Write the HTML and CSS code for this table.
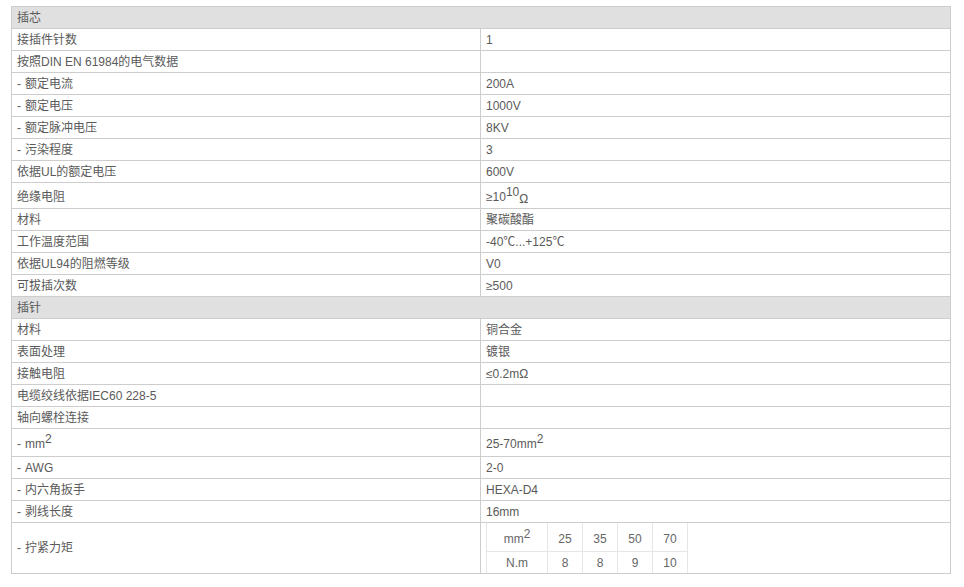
FILE: index.html
```html
<!DOCTYPE html>
<html lang="zh">
<head>
<meta charset="utf-8">
<title>技术参数</title>
<link rel="stylesheet" href="styles.css">
</head>
<body>
<div class="page">
<table class="spec">
  <colgroup><col class="c-label"><col class="c-value"></colgroup>
  <tr class="sec"><td colspan="2">插芯</td></tr>
  <tr><td>接插件针数</td><td>1</td></tr>
  <tr><td>按照DIN EN 61984的电气数据</td><td></td></tr>
  <tr><td><span class="dash">-</span>额定电流</td><td>200A</td></tr>
  <tr><td><span class="dash">-</span>额定电压</td><td>1000V</td></tr>
  <tr><td><span class="dash">-</span>额定脉冲电压</td><td>8KV</td></tr>
  <tr><td><span class="dash">-</span>污染程度</td><td>3</td></tr>
  <tr><td>依据UL的额定电压</td><td>600V</td></tr>
  <tr class="tall"><td>绝缘电阻</td><td>≥10<sup>10</sup><sub>Ω</sub></td></tr>
  <tr><td>材料</td><td>聚碳酸酯</td></tr>
  <tr><td>工作温度范围</td><td>-40℃...+125℃</td></tr>
  <tr><td>依据UL94的阻燃等级</td><td>V0</td></tr>
  <tr><td>可拔插次数</td><td>≥500</td></tr>
  <tr class="sec"><td colspan="2">插针</td></tr>
  <tr><td>材料</td><td>铜合金</td></tr>
  <tr><td>表面处理</td><td>镀银</td></tr>
  <tr><td>接触电阻</td><td>≤0.2mΩ</td></tr>
  <tr><td>电缆绞线依据IEC60 228-5</td><td></td></tr>
  <tr><td>轴向螺栓连接</td><td></td></tr>
  <tr class="tall2"><td><span class="dash">-</span>mm<sup>2</sup></td><td>25-70mm<sup>2</sup></td></tr>
  <tr><td><span class="dash">-</span>AWG</td><td>2-0</td></tr>
  <tr><td><span class="dash">-</span>内六角扳手</td><td>HEXA-D4</td></tr>
  <tr><td><span class="dash">-</span>剥线长度</td><td>16mm</td></tr>
  <tr class="torque">
    <td><span class="dash">-</span>拧紧力矩</td>
    <td class="inner-cell">
      <table class="inner">
        <tr class="r1"><td class="w1">mm<sup>2</sup></td><td>25</td><td>35</td><td>50</td><td>70</td></tr>
        <tr class="r2"><td class="w1">N.m</td><td>8</td><td>8</td><td>9</td><td>10</td></tr>
      </table>
    </td>
  </tr>
</table>
</div>
</body>
</html>
```

FILE: styles.css
```css
html, body {
  margin: 0;
  padding: 0;
  background: #fff;
}
.page {
  padding: 6px 13px 0 11px;
}
.spec {
  width: 940px;
  border-collapse: collapse;
  font-family: "Liberation Sans", "Noto Sans CJK SC", sans-serif;
  font-size: 12px;
  color: #5a5a5a;
}
.c-label { width: 469px; }
.spec > tbody > tr > td {
  border: 1px solid #cdcdcd;
  height: 21px;
  line-height: 14px;
  padding: 0 5px;
  vertical-align: middle;
  text-align: left;
}
.spec > tbody > tr.sec > td {
  background: #e0e0e0;
}
.dash {
  display: inline-block;
  width: 8px;
}
.spec sup {
  font-size: 12px;
  line-height: 0;
  vertical-align: 5px;
}
.spec sub {
  font-size: 12px;
  line-height: 0;
  vertical-align: -2px;
}
.spec > tbody > tr.tall > td { height: 23px; padding-top: 2px; }
.spec > tbody > tr.tall2 > td { height: 25px; padding-top: 2px; }
.spec > tbody > tr.torque > td { height: 50px; }
.spec > tbody > tr.torque > td.inner-cell {
  padding: 0 5px;
  vertical-align: top;
}
.inner {
  border-collapse: collapse;
  color: #666;
  font-size: 12px;
}
.inner td {
  border: 1px solid #e6e6e6;
  border-top: none;
  text-align: center;
  width: 34px;
  padding: 0;
}
.inner td.w1 { width: 60px; }
.inner tr.r1 td { height: 25px; padding-top: 3px; }
.inner tr.r2 td { height: 21px; border-bottom: none; }
```
